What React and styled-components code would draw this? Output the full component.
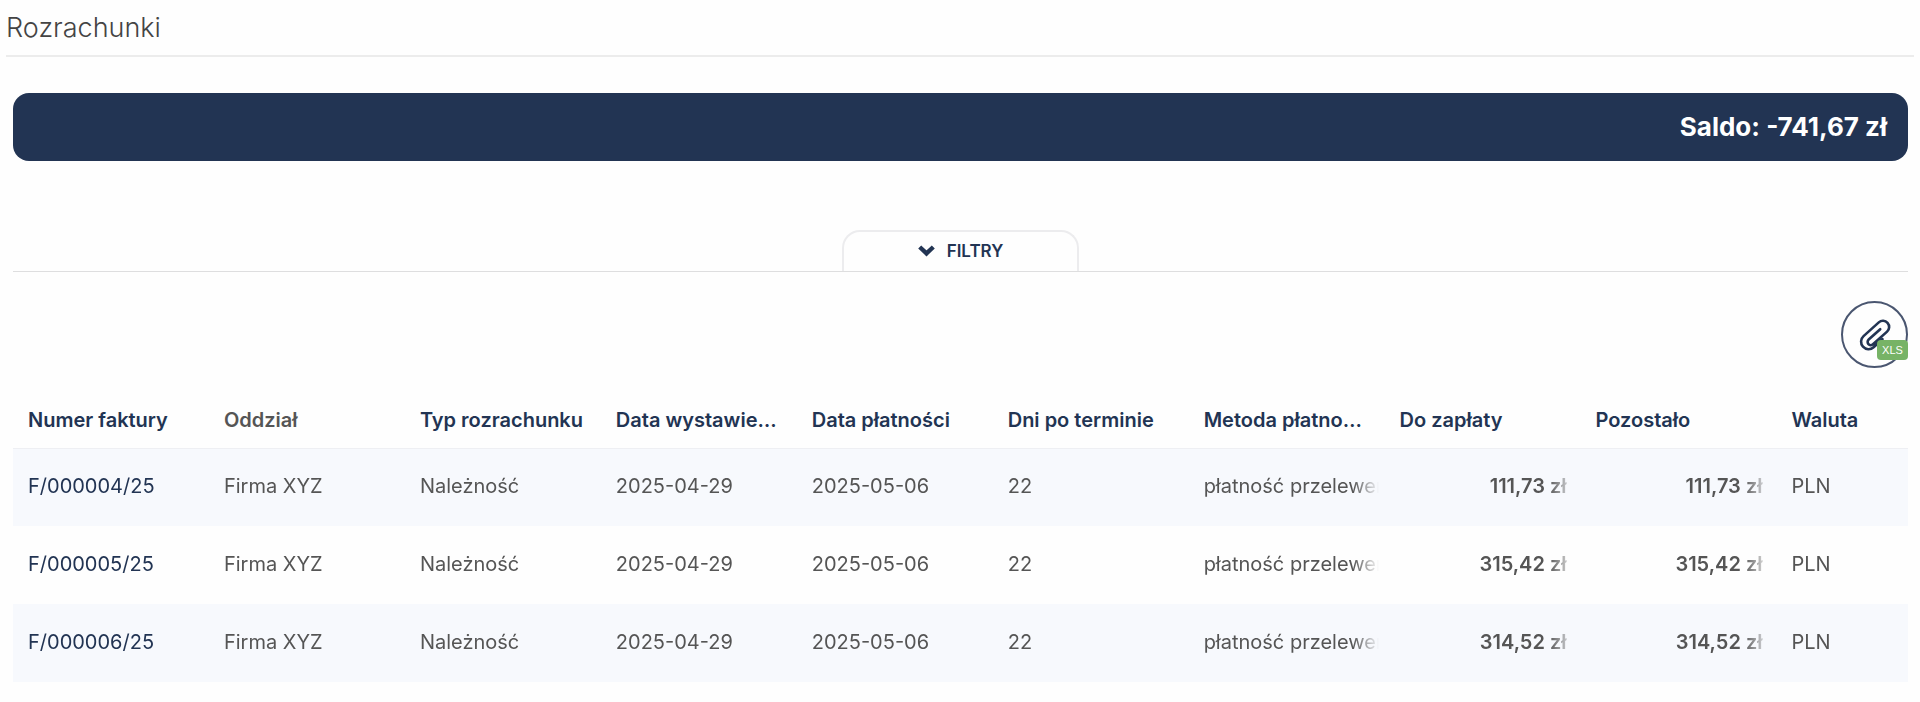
import React from "react";
import styled, { createGlobalStyle } from "styled-components";

const navy = "#223453";

const GlobalStyle = createGlobalStyle`
  * { box-sizing: border-box; }
  body {
    margin: 0;
    background: #fefefe;
    color: #555;
    font-family: Inter, "Liberation Sans", sans-serif;
    font-size: 20px;
  }
`;

const Page = styled.main`
  padding: 0 6px 20px;
`;

const Title = styled.h1`
  margin: 0;
  padding: 12px 0 11px;
  border-bottom: 2px solid #ececec;
  color: #444;
  font-size: 27px;
  line-height: 32px;
  font-weight: 300;
`;

const Content = styled.div`
  padding: 36px 6px 0 7px;
`;

const BalanceBar = styled.div`
  display: flex;
  align-items: center;
  justify-content: flex-end;
  height: 68px;
  padding: 0 21px 2px;
  border-radius: 16px;
  background: ${navy};
  color: #fff;
  font-size: 26px;
  font-weight: 700;
`;

const FilterRow = styled.div`
  display: flex;
  justify-content: center;
  margin-top: 69px;
  border-bottom: 1px solid #dededf;
`;

const FilterButton = styled.button`
  display: flex;
  align-items: center;
  justify-content: center;
  gap: 12px;
  width: 237px;
  height: 41px;
  padding: 0 0 2px;
  border: 2px solid #ececee;
  border-bottom: 0;
  border-radius: 18px 18px 0 0;
  background: transparent;
  color: ${navy};
  font: inherit;
  font-size: 17px;
  font-weight: 600;
  cursor: pointer;
`;

const Toolbar = styled.div`
  display: flex;
  justify-content: flex-end;
  padding: 29px 0 24px;
`;

const ExportButton = styled.button`
  position: relative;
  display: flex;
  align-items: center;
  justify-content: center;
  width: 67px;
  height: 67px;
  padding: 0;
  border: 2px solid #4a5670;
  border-radius: 50%;
  background: transparent;
  color: ${navy};
  cursor: pointer;
`;

const FormatBadge = styled.span`
  position: absolute;
  right: -2px;
  bottom: 6px;
  width: 31px;
  height: 20px;
  border-radius: 4px;
  background: #77b366;
  color: #fff;
  font-size: 11px;
  line-height: 20px;
  text-align: center;
`;

const Table = styled.table`
  width: 100%;
  table-layout: fixed;
  border-collapse: collapse;
`;

const Column = styled.col`
  width: ${(p) => (p.$narrow ? "auto" : "10.34%")};
`;

const HeaderCell = styled.th`
  height: 56px;
  padding: 0 15px;
  border-bottom: 1px solid #eeeff3;
  color: ${(p) => (p.$muted ? "#555" : navy)};
  font-weight: 600;
  text-align: left;
  white-space: nowrap;
  overflow: hidden;
  text-overflow: ellipsis;
`;

const Row = styled.tr`
  &:nth-child(odd) { background: #f7f9fd; }
`;

const Cell = styled.td`
  height: 78px;
  padding: 0 6px 2px 15px;
`;

const FadingText = styled.div`
  padding-right: ${(p) => (p.$amount ? "8px" : "0")};
  overflow: hidden;
  white-space: nowrap;
  line-height: 28px;
  text-align: ${(p) => (p.$amount ? "right" : "left")};
  font-weight: ${(p) => (p.$amount ? 600 : 400)};
  mask-image: linear-gradient(to left, transparent, #000 26px);
`;

const InvoiceLink = styled.a`
  color: ${navy};
  text-decoration: none;
`;

const columns = [
  "Numer faktury",
  "Oddział",
  "Typ rozrachunku",
  "Data wystawienia",
  "Data płatności",
  "Dni po terminie",
  "Metoda płatności",
  "Do zapłaty",
  "Pozostało",
  "Waluta",
];

const invoices = [
  { number: "F/000004/25", amount: "111,73 zł" },
  { number: "F/000005/25", amount: "315,42 zł" },
  { number: "F/000006/25", amount: "314,52 zł" },
];

function ChevronIcon() {
  return (
    <svg width="17" height="12" viewBox="0 0 17 12" fill="none" stroke="currentColor" strokeWidth="4.4" aria-hidden="true">
      <path d="M1.700 2 8.500 8.400 15.300 2" />
    </svg>
  );
}

function ClipIcon() {
  return (
    <svg width="38" height="38" viewBox="-19 -19 38 38" fill="none" stroke="currentColor" strokeWidth="2.600" strokeLinecap="round" aria-hidden="true">
      <g transform="translate(1 0) rotate(-42)">
        <path d="M2 7.500H-10A7.500 7.500 0 0 1-10-7.500H10.500A6.200 6.200 0 0 1 10.500 4.900H-8.500A3.200 3.200 0 0 1-8.500-1.500H7" />
      </g>
    </svg>
  );
}

export default function App() {
  return (
    <>
      <GlobalStyle />
      <Page>
        <Title>Rozrachunki</Title>
        <Content>
          <BalanceBar>Saldo: -741,67 zł</BalanceBar>
          <FilterRow>
            <FilterButton type="button">
              <ChevronIcon />
              FILTRY
            </FilterButton>
          </FilterRow>
          <Toolbar>
            <ExportButton type="button">
              <ClipIcon />
              <FormatBadge>XLS</FormatBadge>
            </ExportButton>
          </Toolbar>
          <Table>
            <colgroup>
              {columns.map((name) => (
                <Column key={name} $narrow={name === "Waluta"} />
              ))}
            </colgroup>
            <thead>
              <tr>
                {columns.map((name) => (
                  <HeaderCell key={name} scope="col" $muted={name === "Oddział"}>
                    {name}
                  </HeaderCell>
                ))}
              </tr>
            </thead>
            <tbody>
              {invoices.map(({ number, amount }) => (
                <Row key={number}>
                  <Cell><FadingText><InvoiceLink href="#">{number}</InvoiceLink></FadingText></Cell>
                  <Cell><FadingText>Firma XYZ</FadingText></Cell>
                  <Cell><FadingText>Należność</FadingText></Cell>
                  <Cell><FadingText>2025-04-29</FadingText></Cell>
                  <Cell><FadingText>2025-05-06</FadingText></Cell>
                  <Cell><FadingText>22</FadingText></Cell>
                  <Cell><FadingText>płatność przelewem</FadingText></Cell>
                  <Cell><FadingText $amount>{amount}</FadingText></Cell>
                  <Cell><FadingText $amount>{amount}</FadingText></Cell>
                  <Cell><FadingText>PLN</FadingText></Cell>
                </Row>
              ))}
            </tbody>
          </Table>
        </Content>
      </Page>
    </>
  );
}
